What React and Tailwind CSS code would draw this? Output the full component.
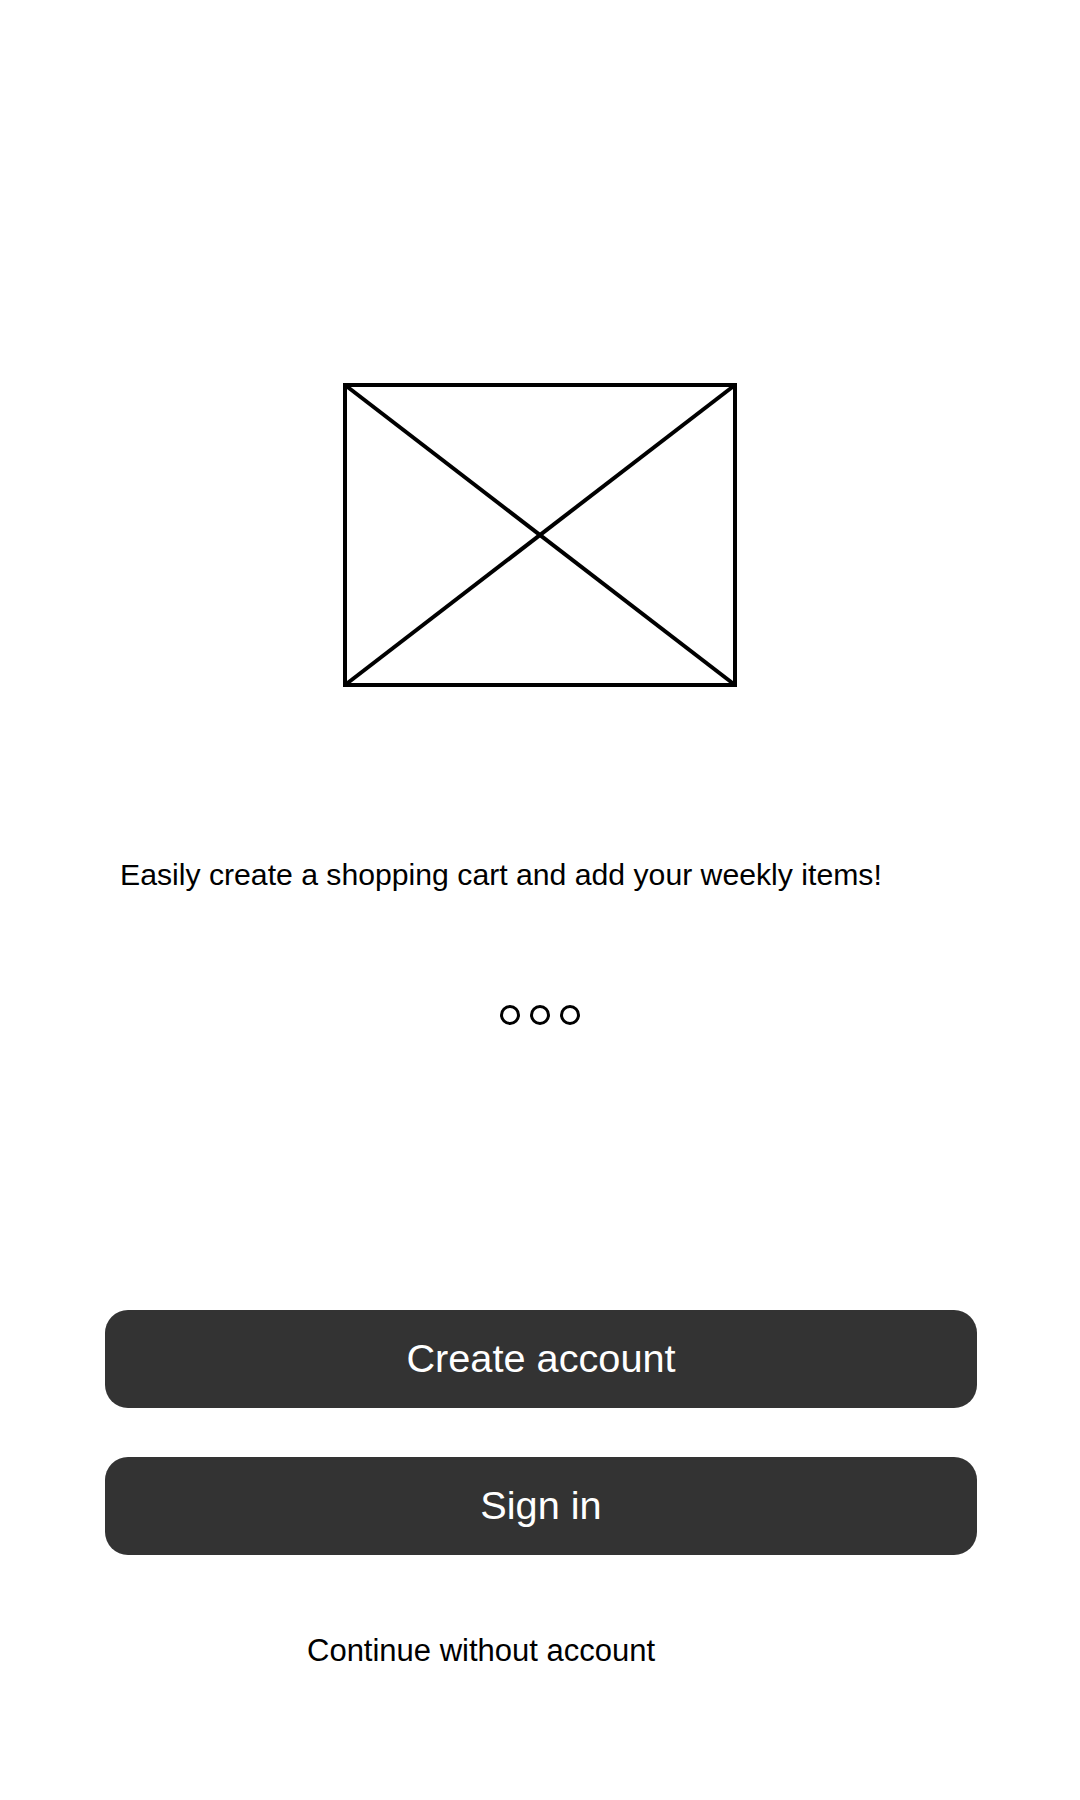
import React from 'react';

const Placeholder = () => (
  <svg width="394" height="304" viewBox="0 0 394 304" fill="none" stroke="#000" strokeWidth="4">
    <rect x="2" y="2" width="390" height="300" />
    <line x1="2" y1="2" x2="392" y2="302" />
    <line x1="392" y1="2" x2="2" y2="302" />
  </svg>
);

const Dot = () => (
  <div className="w-[20px] h-[20px] rounded-full border-[3px] border-black" />
);

const App = () => {
  return (
    <div
      className="w-[1080px] h-[1800px] bg-white text-black flex flex-col"
      style={{ fontFamily: '"Liberation Sans", Arial, sans-serif' }}
    >
      <div className="pt-[383px] flex justify-center">
        <Placeholder />
      </div>

      <p className="mt-[171px] pl-[120px] text-[30.2px] leading-[34px]">
        Easily create a shopping cart and add your weekly items!
      </p>

      <div className="mt-[113px] flex justify-center gap-[10px]">
        <Dot />
        <Dot />
        <Dot />
      </div>

      <div className="mt-[285px] px-[105px] flex flex-col gap-[49px]">
        <button className="h-[98px] w-[872px] rounded-[23px] bg-[#333333] text-white text-[39.7px] leading-none">
          Create account
        </button>
        <button className="h-[98px] w-[872px] rounded-[23px] bg-[#333333] text-white text-[39.7px] leading-none">
          Sign in
        </button>
      </div>

      <p className="mt-[78px] pl-[307px] text-[31px] leading-[36px]">
        Continue without account
      </p>
    </div>
  );
};

export default App;
